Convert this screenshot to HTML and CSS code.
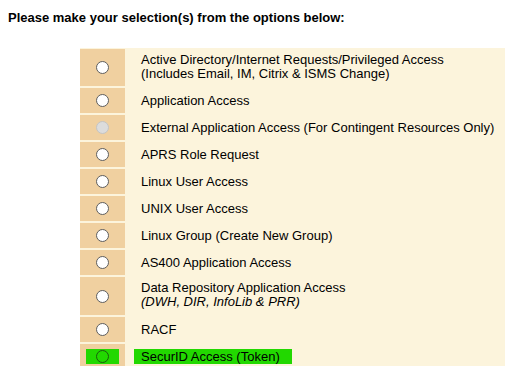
FILE: index.html
```html
<!DOCTYPE html>
<html lang="en">
<head>
    <meta charset="utf-8">
    <title>Access Request</title>
    <link rel="stylesheet" href="styles.css">
</head>
<body>
    <h3 class="intro">Please make your selection(s) from the options below:</h3>

    <div class="valg">
        <div class="rad hoej">
            <div class="knap"><span class="radio"></span></div>
            <div class="tekst">Active Directory/Internet Requests/Privileged Access<br>(Includes Email, IM, Citrix &amp; ISMS Change)</div>
        </div>
        <div class="rad">
            <div class="knap"><span class="radio"></span></div>
            <div class="tekst">Application Access</div>
        </div>
        <div class="rad">
            <div class="knap"><span class="radio slukket"></span></div>
            <div class="tekst">External Application Access (For Contingent Resources Only)</div>
        </div>
        <div class="rad">
            <div class="knap"><span class="radio"></span></div>
            <div class="tekst">APRS Role Request</div>
        </div>
        <div class="rad">
            <div class="knap"><span class="radio"></span></div>
            <div class="tekst">Linux User Access</div>
        </div>
        <div class="rad">
            <div class="knap"><span class="radio"></span></div>
            <div class="tekst">UNIX User Access</div>
        </div>
        <div class="rad">
            <div class="knap"><span class="radio"></span></div>
            <div class="tekst">Linux Group (Create New Group)</div>
        </div>
        <div class="rad">
            <div class="knap"><span class="radio"></span></div>
            <div class="tekst">AS400 Application Access</div>
        </div>
        <div class="rad hoej">
            <div class="knap"><span class="radio"></span></div>
            <div class="tekst">Data Repository Application Access<br><i>(DWH, DIR, InfoLib &amp; PRR)</i></div>
        </div>
        <div class="rad">
            <div class="knap"><span class="radio"></span></div>
            <div class="tekst">RACF</div>
        </div>
        <div class="rad valgt">
            <div class="knap"><span class="markering"><span class="radio"></span></span></div>
            <div class="tekst"><span class="markering">SecurID Access (Token)</span></div>
        </div>
    </div>
</body>
</html>
```

FILE: styles.css
```css
body {
    margin: 8px 0 0 8px;
    font-family: "Liberation Sans", Arial, sans-serif;
    color: #000;
    background: #fff;
    overflow: hidden;
}

.intro {
    font-size: 13px;
    line-height: 15px;
    font-weight: bold;
    margin: 2px 0 23px 0;
}

.valg {
    margin-left: 72px;
    width: calc(100vw - 80px);
    padding-top: 1px;
    background-color: #fcf4dc;
    display: flex;
    flex-direction: column;
    gap: 2px;
}

.rad {
    display: grid;
    grid-template-columns: 45px 1fr;
    height: 25px;
    font-size: 13px;
    line-height: 15px;
}

.rad.hoej {
    height: 38px;
    line-height: 14px;
}

.rad:first-child {
    height: 37px;
}

.knap {
    background-color: #f0d0a0;
    display: flex;
    align-items: center;
    justify-content: center;
}

.tekst {
    padding-left: 16px;
    align-self: center;
    white-space: nowrap;
}

.hoej .tekst {
    padding-bottom: 2px;
}

.radio {
    display: block;
    width: 11px;
    height: 11px;
    border: 1px solid #5e5e5e;
    border-radius: 50%;
    background-color: #fff;
}

.radio.slukket {
    background-color: #dcdcdc;
    border-color: #c4c4c4;
}

.markering {
    background-color: #22d800;
}

.knap .markering {
    width: 33px;
    height: 15px;
    display: flex;
    align-items: center;
    justify-content: center;
}

.knap .markering .radio {
    background-color: #22d800;
    border-color: #1c5a10;
}

.valgt .tekst {
    padding-left: 9px;
}

.tekst .markering {
    display: inline-block;
    padding: 0 12px 0 7px;
}
```
